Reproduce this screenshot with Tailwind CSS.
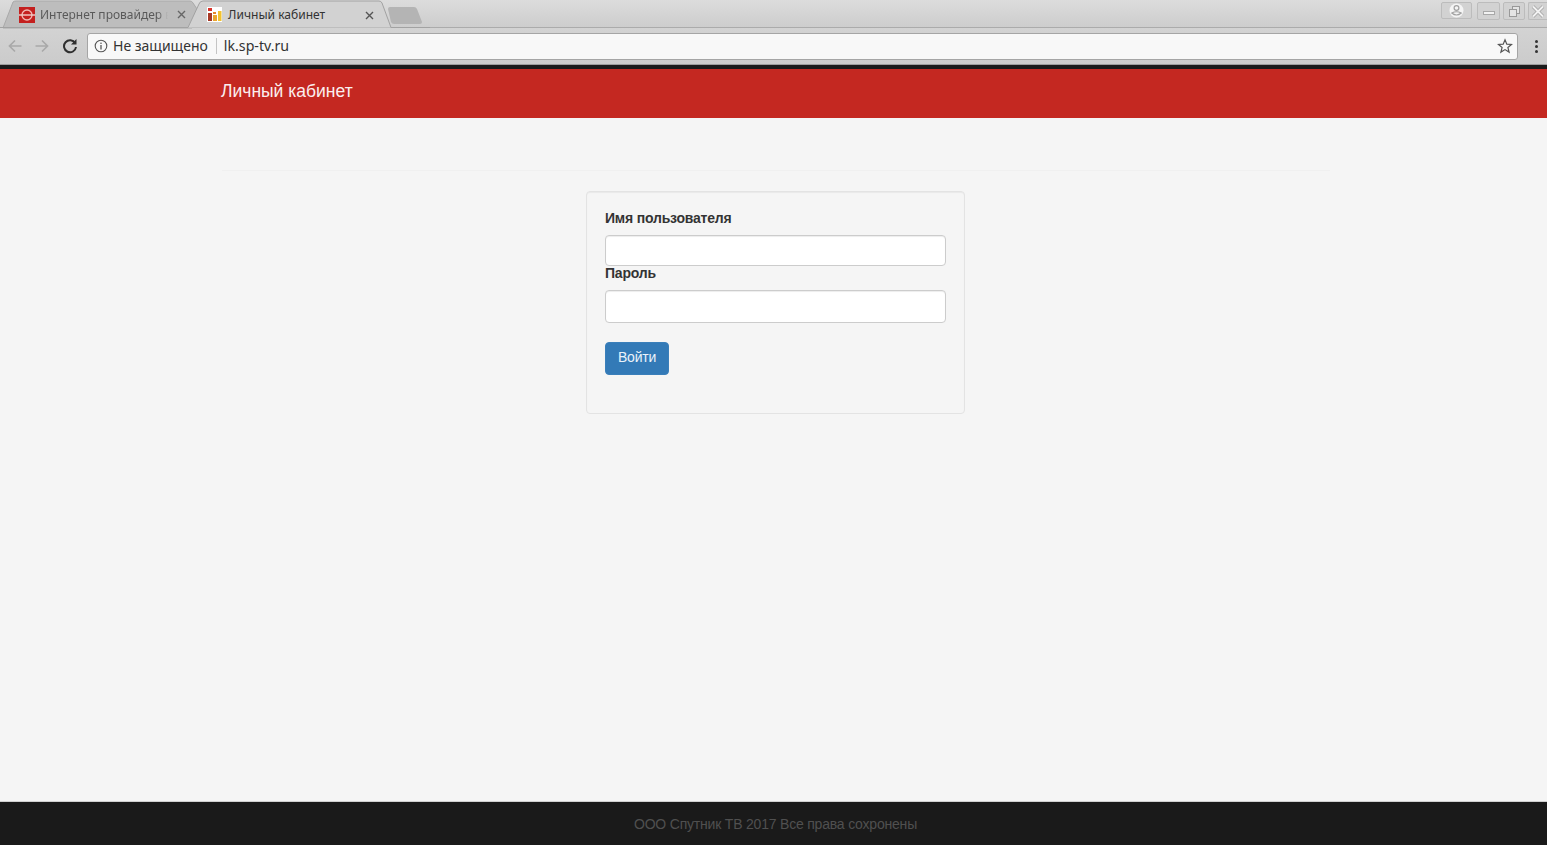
<!DOCTYPE html>
<html lang="ru">
<head>
<meta charset="utf-8">
<title>Личный кабинет</title>
<script src="https://cdn.jsdelivr.net/npm/@tailwindcss/browser@4"></script>
</head>
<body class="m-0 h-[845px] w-[1547px] overflow-hidden bg-[#f5f5f5] font-['Liberation_Sans',Arial,sans-serif]">
<div class="flex h-[845px] flex-col">
  <!-- tab strip -->
  <div class="relative flex h-[28px] shrink-0 items-start justify-between border-b border-[#ababab] bg-gradient-to-b from-[#dcdcdc] to-[#cdcdcd]">
    <div class="relative h-[28px] w-[430px]">
      <svg class="absolute left-0 top-0" width="430" height="29" viewBox="0 0 430 29">
        <path d="M3 28 L13 2 Q14 1 16 1 L190 1 Q192 1 193 3 L199 12 L192 28 Z" fill="#bdbdbd" stroke="#a9a9a9"/>
        <path d="M0 27.5 H188 L199 4 Q200 1 203 1 L379 1 Q381 1 382 3 L391 27.5 H430" fill="#d2d2d2" stroke="#a2a2a2"/>
        <path d="M388 9 Q388 7 390 7 L414 7 Q416 7 417 9 L422 22 Q422 24 420 24 L394 24 Q392 24 391 22 Z" fill="#b4b4b4"/>
      </svg>
      <div class="absolute left-[19px] top-[7px] flex h-[16px] w-[16px] items-center justify-center bg-[#c4201f]">
        <svg width="16" height="16" viewBox="0 0 16 16"><circle cx="8" cy="8" r="5" fill="none" stroke="#f0b9b4" stroke-width="1.3"/><path d="M0 8H16" stroke="#f3d0cc" stroke-width="1.4"/></svg>
      </div>
      <span class="absolute left-[40px] top-[7px] whitespace-nowrap font-['Noto_Sans',sans-serif] text-[12px] leading-[16px] text-[#5a5a5a] [mask-image:linear-gradient(to_right,black_118px,transparent_128px)]">Интернет провайдер в</span>
      <svg class="absolute left-[177px] top-[10px]" width="9" height="9" viewBox="0 0 9 9"><path d="M1 1L8 8M8 1L1 8" stroke="#666" stroke-width="1.4"/></svg>
      <svg class="absolute left-[207px] top-[7px]" width="15" height="15" viewBox="0 0 15 15"><rect width="15" height="15" fill="#fff"/><rect x="1" y="1" width="4" height="3" fill="#d9342b"/><rect x="1" y="6" width="4" height="8" fill="#a83a26"/><rect x="6" y="5" width="3" height="2" fill="#e8882b"/><rect x="6" y="8" width="4" height="6" fill="#eba62f"/><rect x="11" y="4" width="3.5" height="10" fill="#f2c230"/></svg>
      <span class="absolute left-[228px] top-[7px] whitespace-nowrap font-['Noto_Sans',sans-serif] text-[12.05px] leading-[16px] text-[#333]">Личный кабинет</span>
      <svg class="absolute left-[365px] top-[11px]" width="9" height="9" viewBox="0 0 9 9"><path d="M1 1L8 8M8 1L1 8" stroke="#555" stroke-width="1.4"/></svg>
    </div>
    <div class="flex items-start pt-[2px]">
      <div class="flex h-[17px] w-[31px] items-center justify-center rounded-[2px] border border-[#bcbcbc] bg-[#d2d2d2]">
        <svg width="15" height="15" viewBox="0 0 15 15"><circle cx="7.5" cy="7.5" r="7" fill="#f4f4f4"/><circle cx="7.5" cy="5" r="2.4" fill="none" stroke="#a0a0a0" stroke-width="1.2"/><path d="M2.8 10Q7.5 7.5 12.2 10Q7.5 14 2.8 10Z" fill="none" stroke="#a0a0a0" stroke-width="1.2"/></svg>
      </div>
      <div class="ml-[5px] flex h-[18px] w-[23px] items-center justify-center rounded-[2px] border border-[#bcbcbc] bg-[#d2d2d2]"><div class="mt-[3px] h-[2px] w-[10px] bg-[#f2f2f2] shadow-[0_0_0_1px_#a8a8a8]"></div></div>
      <div class="ml-[3px] flex h-[18px] w-[22px] items-center justify-center rounded-[2px] border border-[#bcbcbc] bg-[#d2d2d2]">
        <svg width="13" height="13" viewBox="0 0 13 13"><rect x="4.5" y="1.5" width="7" height="7" fill="#e4e4e4" stroke="#999"/><rect x="1.5" y="4.5" width="7" height="7" fill="#e4e4e4" stroke="#999"/></svg>
      </div>
      <div class="ml-[3px] flex h-[18px] w-[19px] items-center justify-center rounded-l-[2px] border border-r-0 border-[#bcbcbc] bg-[#d2d2d2]">
        <svg width="14" height="13" viewBox="0 0 14 13"><path d="M2 1.5L12 11.5M12 1.5L2 11.5" stroke="#9f9f9f" stroke-width="3.4"/><path d="M2 1.5L12 11.5M12 1.5L2 11.5" stroke="#f2f2f2" stroke-width="2"/></svg>
      </div>
    </div>
  </div>
  <!-- toolbar -->
  <div class="flex h-[37px] shrink-0 items-center border-b border-[#9c9c9c] bg-gradient-to-b from-[#d3d3d3] to-[#cbcbcb] pl-[7px] pr-[9px]">
    <svg class="mr-[11px]" width="16" height="16" viewBox="0 0 16 16"><path d="M14.5 8H2.5M8 2.5L2.5 8L8 13.5" fill="none" stroke="#a9a9a9" stroke-width="1.7"/></svg>
    <svg class="mr-[12px]" width="16" height="16" viewBox="0 0 16 16"><path d="M1.5 8H13.5M8 2.5L13.5 8L8 13.5" fill="none" stroke="#a9a9a9" stroke-width="1.7"/></svg>
    <svg class="mr-[9px]" width="16" height="16" viewBox="0 0 16 16"><path d="M13.2 5.2A6 6 0 1 0 14 9" fill="none" stroke="#2f2f2f" stroke-width="2"/><path d="M14.5 1V6.5H9Z" fill="#2f2f2f"/></svg>
    <div class="flex h-[27px] flex-1 items-center rounded-[3px] border border-[#a5a5a5] bg-[#f8f8f8] pl-[6px] pr-[4px]">
      <svg class="mr-[5px]" width="14" height="14" viewBox="0 0 14 14"><circle cx="7" cy="7" r="5.8" fill="none" stroke="#555" stroke-width="1.1"/><path d="M7 6V10.5" stroke="#555" stroke-width="1.3"/><circle cx="7" cy="4.2" r="0.8" fill="#555"/></svg>
      <span class="font-['Noto_Sans',sans-serif] text-[14px] leading-[20px] text-[#333]">Не защищено</span>
      <div class="ml-[8px] mr-[7px] h-[16px] w-px bg-[#c4c4c4]"></div>
      <span class="flex-1 font-['Noto_Sans',sans-serif] text-[14.2px] leading-[20px] text-[#333]">lk.sp-tv.ru</span>
      <svg width="16" height="16" viewBox="0 0 16 16"><path d="M8 1.8L9.8 6.2L14.5 6.5L10.9 9.5L12.1 14.1L8 11.6L3.9 14.1L5.1 9.5L1.5 6.5L6.2 6.2Z" fill="none" stroke="#555" stroke-width="1.2"/></svg>
    </div>
    <div class="ml-[17px] flex flex-col gap-[2px]">
      <div class="h-[3px] w-[3px] rounded-full bg-[#333]"></div>
      <div class="h-[3px] w-[3px] rounded-full bg-[#333]"></div>
      <div class="h-[3px] w-[3px] rounded-full bg-[#333]"></div>
    </div>
  </div>
  <div class="h-[4px] shrink-0 bg-[#1a1a1a]"></div>
  <!-- navbar -->
  <header class="flex h-[49px] shrink-0 items-center bg-[#c42821] pb-[4px] pl-[221px]">
    <span class="text-[17.5px] text-[#fbeeee]">Личный кабинет</span>
  </header>
  <!-- main -->
  <main class="flex flex-1 flex-col items-center pl-[4px]">
    <div class="mt-[52px] h-px w-[1108px] bg-[#f0f0f0]"></div>
    <div class="mt-[20px] h-[223px] w-[379px] rounded-[4px] border border-[#e3e3e3] bg-[#f5f5f5] px-[18px] pt-[18px] shadow-[inset_0_1px_1px_rgba(0,0,0,0.05)]">
      <label class="block text-[14px] font-bold leading-[16px] tracking-[-0.2px] text-[#333]">Имя пользователя</label>
      <div class="mt-[9px] h-[31px] w-[341px] rounded-[4px] border border-[#ccc] bg-white shadow-[inset_0_1px_1px_rgba(0,0,0,0.075)]"></div>
      <label class="-mt-px block text-[14px] font-bold leading-[16px] tracking-[-0.2px] text-[#333]">Пароль</label>
      <div class="mt-[9px] h-[33px] w-[341px] rounded-[4px] border border-[#ccc] bg-white shadow-[inset_0_1px_1px_rgba(0,0,0,0.075)]"></div>
      <button class="mt-[19px] block h-[33px] w-[64px] rounded-[4px] border border-[#3a7fba] bg-[#337ab7] pb-[2px] text-[14px] tracking-[-0.2px] text-[#eaf2fa]">Войти</button>
    </div>
  </main>
  <!-- footer -->
  <footer class="flex h-[44px] shrink-0 items-center justify-center border-t border-[#d0d0d0] bg-[#1a1a1a] pl-[4px] pt-[2px]">
    <span class="text-[14px] tracking-[-0.2px] text-[#505050]">ООО Спутник ТВ 2017 Все права сохронены</span>
  </footer>
</div>
</body>
</html>
